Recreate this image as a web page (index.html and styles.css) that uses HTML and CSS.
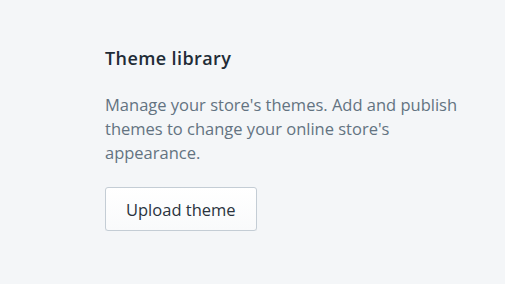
FILE: index.html
```html
<!DOCTYPE html>
<html lang="en">
<head>
    <meta charset="UTF-8">
    <title>Themes</title>
    <link rel="stylesheet" href="styles.css">
</head>
<body>
    <section class="annotated">
        <h2 class="heading">Theme library</h2>
        <p class="description">Manage your store's themes. Add and publish themes to change your online store's appearance.</p>
        <button class="btn" type="button">Upload theme</button>
    </section>
</body>
</html>
```

FILE: styles.css
```css
body {
    margin: 0;
    background: #f4f6f8;
    font-family: "Open Sans", "Noto Sans", sans-serif;
    color: #212b36;
}
.annotated {
    padding: 46px 20px 0 105px;
    width: 365px;
}
.heading {
    margin: 0;
    font-size: 18px;
    font-weight: 600;
    letter-spacing: 0.4px;
    line-height: 24px;
}
.description {
    margin: 23px 0 0;
    font-size: 16.5px;
    line-height: 24px;
    color: #637381;
}
.btn {
    margin-top: 22px;
    height: 44px;
    padding: 0 20px;
    font-family: inherit;
    font-size: 16.5px;
    color: #2a333d;
    background: linear-gradient(to bottom, #fff, #f9fafb);
    border: 1px solid #c4cdd5;
    border-radius: 3px;
    box-shadow: 0 1px 0 rgba(22, 29, 37, 0.05);
}
```
